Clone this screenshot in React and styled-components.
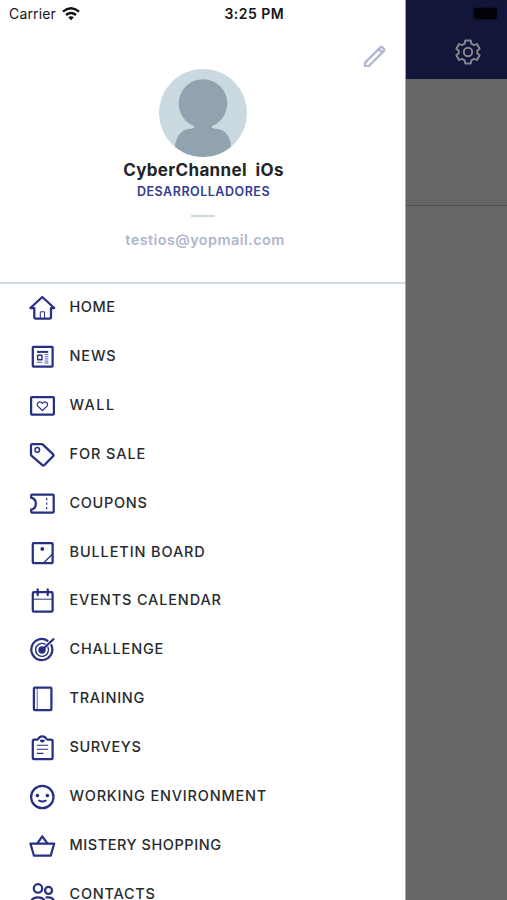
import React from "react";
import styled, { createGlobalStyle } from "styled-components";

const NAVY = "#273083";

const GlobalStyle = createGlobalStyle`
  * { box-sizing: border-box; }
  body { margin: 0; background: #666; }
`;

const Screen = styled.div`
  position: relative;
  display: flex;
  width: 507px;
  height: 900px;
  overflow: hidden;
  background: #666;
  font-family: Inter, "Liberation Sans", sans-serif;
`;

const Drawer = styled.aside`
  display: flex;
  flex-direction: column;
  flex: none;
  width: 406px;
  height: 900px;
  overflow: hidden;
  background: #fff;
  border-right: 1px solid #a4a5ad;
`;

const StatusBar = styled.div`
  display: flex;
  align-items: center;
  flex: none;
  height: 28px;
  padding-left: 9px;
  color: #151515;
  line-height: 28px;
  white-space: nowrap;
`;

const Carrier = styled.span`
  width: 53px;
  font-size: 14px;
  letter-spacing: 0.15px;
`;

const Clock = styled.time`
  margin-left: 144.5px;
  font-size: 14px;
  font-weight: 600;
  letter-spacing: 0.45px;
`;

const Profile = styled.header`
  display: flex;
  flex-direction: column;
  align-items: center;
  flex: none;
  height: 256px;
  padding-left: 1px;
  border-bottom: 2px solid #d0dae3;
`;

const EditRow = styled.div`
  display: flex;
  justify-content: flex-end;
  align-self: stretch;
  height: 41px;
  padding: 15px 17px 0 0;
`;

const Avatar = styled.svg`
  flex: none;
  width: 88px;
  height: 88px;
`;

const Name = styled.h1`
  margin: 3px 0 0;
  padding-left: 1px;
  font-size: 17px;
  line-height: 20px;
  font-weight: 700;
  letter-spacing: ${(p) => p.$spacing}px;
  white-space: pre;
  color: #222527;
`;

const Group = styled.div`
  margin-top: 3px;
  padding-left: 1px;
  font-size: 12.5px;
  line-height: 17px;
  font-weight: 600;
  letter-spacing: ${(p) => p.$spacing}px;
  color: #323d91;
`;

const Dash = styled.div`
  width: 24px;
  height: 2px;
  margin-top: 15px;
  background: #ccd9e1;
`;

const Email = styled.div`
  margin-top: 14px;
  padding-left: 4px;
  font-size: 14.5px;
  line-height: 18px;
  font-weight: 600;
  letter-spacing: ${(p) => p.$spacing}px;
  color: #b0b5ce;
`;

const Menu = styled.nav`
  display: flex;
  flex-direction: column;
  flex: none;
  margin-top: -0.6px;
`;

const MenuItem = styled.a`
  display: flex;
  align-items: center;
  flex: none;
  height: 48.87px;
  padding-left: 28px;
`;

const Glyph = styled.svg`
  flex: none;
  width: 28px;
  height: 28px;
  margin-top: 1px;
  overflow: visible;
  fill: none;
  stroke: ${NAVY};
  stroke-width: 2.25;
  stroke-linecap: round;
  stroke-linejoin: round;
  .thin { stroke-width: 1; }
  .dot { fill: ${NAVY}; stroke: none; }
`;

const Label = styled.span`
  margin: -1px 0 0 13.5px;
  font-size: 14.5px;
  font-weight: 550;
  line-height: 20px;
  letter-spacing: ${(p) => p.$spacing}px;
  white-space: nowrap;
  color: #292c2f;
`;

const Backdrop = styled.main`
  flex: 1;
  height: 900px;
`;

const NavBar = styled.div`
  display: flex;
  flex-direction: column;
  align-items: flex-end;
  height: 79px;
  padding: 8px 10px 0 0;
  background: #12163a;
`;

const Battery = styled.div`
  width: 23px;
  height: 11px;
  border-radius: 3px;
  background: #020307;
  box-shadow: 0 0 2px #020307;
`;

const SettingsIcon = styled.svg`
  width: 26px;
  height: 26px;
  margin: 20px 16px 0 0;
  fill: none;
  stroke: #85868d;
  stroke-width: 2;
  stroke-linejoin: round;
`;

const Panel = styled.div`
  height: 127px;
  border-bottom: 1px solid #505050;
`;

const items = [
  { label: "HOME", spacing: 0.5, icon: <>
    <path d="M2.4 14 14.3 3 26.2 14H23V23Q23 24.6 21.4 24.6H7.9Q6.3 24.6 6.3 23V14Z" />
    <path className="thin" d="M12.3 24V17.8H16.5V24" /></> },
  { label: "NEWS", spacing: 0.85, icon: <>
    <rect x="4.8" y="3.8" width="19.8" height="19.8" rx=".7" />
    <path d="M9 8.9H20.2" strokeWidth="2" strokeLinecap="butt" />
    <rect x="9.6" y="12.3" width="4.4" height="4.4" strokeWidth="1.4" />
    <path className="thin" d="M17 11.5H20M17 13.7H20M17 15.9H20M9 19.3H14M17 18.1H20M17 20H20" opacity=".75" /></> },
  { label: "WALL", spacing: 1.45, icon: <>
    <rect x="3.1" y="5" width="22.8" height="17.6" rx=".8" />
    <path d="M14.4 18.6 9.9 14.1C7.7 11.8 11.5 7.9 14.4 11.3C17.3 7.9 21.1 11.8 18.9 14.1Z" strokeWidth="1.3" /></> },
  { label: "FOR SALE", spacing: 0.9, icon: <>
    <path d="M3 4.2Q3 3 4.2 3H13.5Q14.3 3 14.9 3.6L25.2 13.4Q26 14.3 25.2 15.1L16.2 24.2Q15.3 25 14.4 24.2L3.7 14.8Q3 14.2 3 13.4Z" />
    <circle cx="9.3" cy="8.9" r="2.3" strokeWidth="1.5" /></> },
  { label: "COUPONS", spacing: 0.68, icon: <>
    <path d="M3.2 7.7V5.4Q3.2 4.6 4 4.6H24.7Q25.7 4.6 25.7 5.6V21.7Q25.7 22.7 24.7 22.7H4Q3.2 22.7 3.2 22V19.7A6.2 6.2 0 0 0 3.2 7.7Z" />
    <path d="M18.7 8V10.2M18.7 12.5V14.7M18.7 17V19.2" strokeWidth="1.2" strokeLinecap="butt" /></> },
  { label: "BULLETIN BOARD", spacing: 0.88, icon: <>
    <rect x="4.8" y="4.1" width="19.8" height="20" rx=".8" />
    <circle className="dot" cx="14.3" cy="9.9" r="1.9" />
    <path d="M24.5 15 15.5 24" strokeWidth="1.2" /></> },
  { label: "EVENTS CALENDAR", spacing: 0.85, icon: <>
    <rect x="4.8" y="5.2" width="19.8" height="19.5" rx="1.2" />
    <path d="M9.7 2.4V8M19.7 2.4V8" /><path className="thin" d="M5 12.2H24" /></> },
  { label: "CHALLENGE", spacing: 0.8, icon: <>
    <path d="M19.5 4.7A10.5 10.5 0 1 0 23.4 9.2" />
    <path d="M17 8.1A6.5 6.5 0 1 0 20 11.3" strokeWidth="1.4" />
    <circle className="dot" cx="14" cy="14" r="3.7" />
    <path d="M14 14 25.4 3.2" /></> },
  { label: "TRAINING", spacing: 0.72, icon: <>
    <rect x="5.9" y="2.6" width="17.5" height="22.6" rx="1" />
    <path className="thin" d="M9.2 3V25" opacity=".75" /></> },
  { label: "SURVEYS", spacing: 0.6, icon: <>
    <path d="M6.2 5.6H9.2C10.2 5.6 10.5 4.2 11.3 3.5Q14.3 1.4 17.3 3.5C18.1 4.2 18.5 5.6 19.5 5.6H22.8Q24.6 5.6 24.6 7.2V23.4Q24.6 25.2 22.8 25.2H6.5Q4.8 25.2 4.8 23.4V7.2Q4.8 5.6 6.2 5.6Z" />
    <path className="dot" d="M11.6 6.3Q14.3 4.8 17 6.3Q16.3 8.6 14.3 8.6T11.6 6.3Z" />
    <path d="M9.2 11.3H19.7M9.2 15.3H19.7M9.2 19.4H15" strokeWidth="1.1" /></> },
  { label: "WORKING ENVIRONMENT", spacing: 0.8, icon: <>
    <circle cx="14.3" cy="14" r="11.2" />
    <circle className="dot" cx="9.4" cy="12.6" r="1.8" />
    <circle className="dot" cx="19.4" cy="12.6" r="1.8" />
    <path d="M11.1 17.6Q14.4 19.4 17.8 17.6" strokeWidth="1.9" /></> },
  { label: "MISTERY SHOPPING", spacing: 0.54, icon: <>
    <path d="M2.4 11.5H26.2L22.7 23.7H6Z" /><path d="M9.5 11.2 14.3 4.3 19.2 11.2" /></> },
  { label: "CONTACTS", spacing: 0.76, icon: <>
    <circle cx="10" cy="7.4" r="4.2" /><circle cx="20.5" cy="9.4" r="3.5" />
    <path d="M2.5 24C2.5 18.5 5 16.3 10 16.3S17.5 18.5 17.5 24M18.5 16.4C23 15.8 26 17.3 26.3 22" /></> },
];

export default function App() {
  return (
    <Screen>
      <GlobalStyle />
      <Drawer>
        <StatusBar>
          <Carrier>Carrier</Carrier>
          <svg width="18" height="14" viewBox="0 0 18 14" fill="none" stroke="#111" strokeWidth="2.4">
            <path d="M.9 4.7Q9-2 17.1 4.7M4 8Q9 4 14 8" />
            <path d="M6.2 10.3Q9 8 11.8 10.3L9 13.2Z" fill="#111" stroke="none" />
          </svg>
          <Clock>3:25 PM</Clock>
        </StatusBar>
        <Profile>
          <EditRow>
            <svg width="26" height="26" viewBox="0 0 26 26" fill="none" stroke="#b1b5d0" strokeWidth="2.2" strokeLinejoin="round">
              <path d="M3 23V19.6L18.7 4.1Q19.4 3.4 20.1 4.1L22.2 6.2Q22.9 6.9 22.2 7.6L6.8 23Z" />
              <path d="M16.7 6.1 20.2 9.6" />
            </svg>
          </EditRow>
          <Avatar viewBox="0 0 88 88">
            <defs><clipPath id="avatarClip"><circle cx="44" cy="44" r="44" /></clipPath></defs>
            <circle cx="44" cy="44" r="44" fill="#cad8df" />
            <g fill="#92a3b0" clipPath="url(#avatarClip)">
              <circle cx="44" cy="34.5" r="24.3" />
              <path d="M36 56H52Q52 59.5 57 59.7C67 60 72 69 72 79V90H16V79C16 69 22 60 31 59.7Q36 59.5 36 56Z" />
            </g>
          </Avatar>
          <Name $spacing={0.34}>{"CyberChannel  iOs"}</Name>
          <Group $spacing={0.52}>DESARROLLADORES</Group>
          <Dash />
          <Email $spacing={0.4}>testios@yopmail.com</Email>
        </Profile>
        <Menu>
          {items.map(({ label, spacing, icon }) => (
            <MenuItem key={label}>
              <Glyph viewBox="0 0 28 28">{icon}</Glyph>
              <Label $spacing={spacing}>{label}</Label>
            </MenuItem>
          ))}
        </Menu>
      </Drawer>
      <Backdrop>
        <NavBar>
          <Battery />
          <SettingsIcon viewBox="0 0 26 26">
            <path d="M10.3 1.5H15.7L16.3 4.6L19 6.1L22 5.1L24.6 9.7L22.2 11.7V14.3L24.6 16.3L22 20.9L19 19.9L16.3 21.4L15.7 24.5H10.3L9.7 21.4L7 19.9L4 20.9L1.4 16.3L3.8 14.3V11.7L1.4 9.7L4 5.1L7 6.1L9.7 4.6Z" />
            <circle cx="13" cy="13" r="4.2" />
          </SettingsIcon>
        </NavBar>
        <Panel />
      </Backdrop>
    </Screen>
  );
}
